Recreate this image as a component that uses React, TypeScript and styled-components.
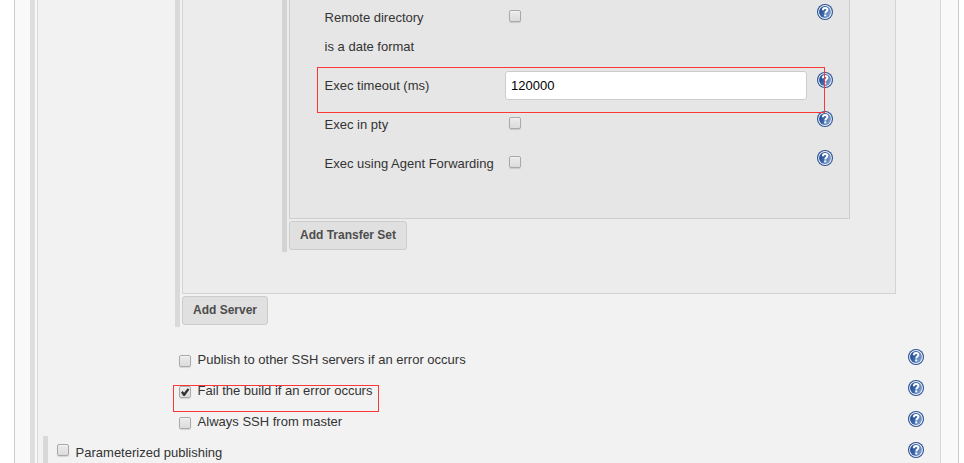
import React, { useId } from 'react';
import styled, { createGlobalStyle } from 'styled-components';

const GlobalStyle = createGlobalStyle`
  * { box-sizing: border-box; }
  body {
    margin: 0;
    background: #fff;
    color: #333;
    font: 13px/29px "Liberation Sans", Arial, Helvetica, sans-serif;
  }
`;

const Page = styled.div`
  height: 463px;
  width: 964px;
  padding: 0 5px 0 14px;
  overflow: hidden;
`;

const Section = styled.section`
  display: flex;
  gap: 2px;
  width: 945px;
  height: 100%;
  padding-left: 15px;
  background: #f9f9f9;
  border: solid #ccc;
  border-width: 0 1px;
`;

const DragBar = styled.div<{ $tone: string }>`
  flex: none;
  width: 5px;
  background: ${(p) => p.$tone};
`;

const Builder = styled.div`
  width: 904px;
  background: #f2f2f2;
  border: solid #d8d8d8;
  border-width: 0 1px;
`;

const Group = styled.div<{ $indent: number; $height: number }>`
  display: flex;
  gap: 2px;
  height: ${(p) => p.$height}px;
  margin-left: ${(p) => p.$indent}px;
`;

const Stack = styled.div`
  display: flex;
  flex-direction: column;
  align-items: flex-start;
  gap: 2px;
`;

const ServerBox = styled.div`
  width: 714px;
  height: 294px;
  background: #ececec;
  border: 1px solid #d3d3d3;
  border-top: 0;
`;

const TransferBox = styled.div`
  width: 561px;
  height: 219px;
  padding-left: 34px;
  background: #e6e6e6;
  border: 1px solid #cecece;
  border-top: 0;
`;

const Button = styled.button<{ $width: number }>`
  width: ${(p) => p.$width}px;
  height: 29px;
  padding: 0;
  border: 1px solid #ccc;
  border-radius: 3px;
  background: #e0e0e0;
  color: #4d4d4d;
  font: bold 12px/25px "Liberation Sans", Arial, sans-serif;
  white-space: nowrap;
`;

const Field = styled.div<{ $height: number }>`
  display: grid;
  grid-template-columns: 181px 302px 26px;
  align-items: start;
  height: ${(p) => p.$height}px;
`;

const FieldLabel = styled.label`
  padding: 3px 0 0 0.6px;
  white-space: pre-line;
`;

const HelpCell = styled.span<{ $gap?: number }>`
  display: block;
  height: 16px;
  margin: 4px 0 0 ${(p) => p.$gap ?? 0}px;
  line-height: 0;
`;

const TextInput = styled.input`
  width: 302px;
  height: 29px;
  margin-top: 3px;
  padding: 0 5px;
  border: 1px solid #ccc;
  border-radius: 3px;
  background: #fff;
  color: #000;
  font: 13px "Liberation Sans", Arial, sans-serif;
  outline: 0;
`;

const Check = styled.span<{ $top?: number; $left?: number }>`
  display: block;
  flex: none;
  width: 12px;
  height: 12px;
  margin: ${(p) => p.$top ?? 10}px 0 0 ${(p) => p.$left ?? 0}px;
  border: 1px solid #a9a9a9;
  border-radius: 2px;
  background: linear-gradient(#ebebeb, #dcdcdc);
  box-shadow: 0 1px 1px rgba(0, 0, 0, 0.12), inset 0 1px 1px rgba(255, 255, 255, 0.5);
  line-height: 0;
`;

const Options = styled.div`
  height: 109px;
  padding: 18px 0 0 141px;
`;

const OptionRow = styled.div`
  display: flex;
  width: 745px;
  height: 31px;
`;

const OptionLabel = styled.label`
  flex: 1;
  margin-left: 6px;
  padding-left: 0.6px;
  white-space: nowrap;
`;

const ParamRow = styled.div`
  display: flex;
  width: 881px;
  height: 27px;
  margin-left: 5px;
`;

const ParamContent = styled.div`
  display: flex;
  flex: 1;
  padding-top: 2px;
`;

const Highlight = styled.div<{ $x: number; $y: number; $w: number; $h: number }>`
  position: absolute;
  left: ${(p) => p.$x}px;
  top: ${(p) => p.$y}px;
  width: ${(p) => p.$w}px;
  height: ${(p) => p.$h}px;
  border: 1px solid #fb3838;
  pointer-events: none;
`;

function HelpIcon() {
  const id = useId();
  return (
    <svg width="16" height="16" viewBox="0 0 16 16">
      <defs>
        <linearGradient id={id} x1="0" y1="0.3" x2="1" y2="0.7">
          <stop offset="0" stopColor="#1f4790" />
          <stop offset="0.45" stopColor="#3e68ab" />
          <stop offset="1" stopColor="#86a6d4" />
        </linearGradient>
      </defs>
      <circle cx="8" cy="8" r="8" fill="#2b5190" />
      <circle cx="8" cy="8" r="6.9" fill="#f0f4fa" />
      <circle cx="8" cy="8" r="5.95" fill={`url(#${id})`} />
      <path d="M5.8 6.3C5.8 4.6 6.8 3.9 8.1 3.9c1.5 0 2.3.8 2.3 1.9 0 1.7-2.1 1.8-2.1 3.6" fill="none" stroke="#fff" strokeWidth="2" />
      <rect x="7.2" y="10.4" width="2.1" height="2" fill="#fff" />
    </svg>
  );
}

function Checkbox({ checked, top, left }: { checked?: boolean; top?: number; left?: number }) {
  return (
    <Check role="checkbox" aria-checked={!!checked} $top={top} $left={left}>
      {checked && (
        <svg width="10" height="10" viewBox="0 0 10 10">
          <path d="M1 5.5 2.7 4 4.1 5.7 7.6 1.2 9.4 2.5 4.8 8.9 3.5 8.9Z" fill="#333" />
        </svg>
      )}
    </Check>
  );
}

const options = [
  { label: 'Publish to other SSH servers if an error occurs' },
  { label: 'Fail the build if an error occurs', checked: true },
  { label: 'Always SSH from master' },
];

function CheckField({ label, height }: { label: string; height: number }) {
  return (
    <Field $height={height}>
      <FieldLabel>{label}</FieldLabel>
      <Checkbox left={4} />
      <HelpCell $gap={10}><HelpIcon /></HelpCell>
    </Field>
  );
}

export default function App() {
  return (
    <>
      <GlobalStyle />
      <Page>
        <Section>
          <DragBar $tone="#dedede" />
          <Builder>
            <Group $indent={137} $height={327}>
              <DragBar $tone="#d9d9d9" />
              <Stack>
                <ServerBox>
                  <Group $indent={99} $height={252}>
                    <DragBar $tone="#d3d3d3" />
                    <Stack>
                      <TransferBox>
                        <CheckField label={'Remote directory\nis a date format'} height={68} />
                        <Field $height={39}>
                          <FieldLabel>Exec timeout (ms)</FieldLabel>
                          <TextInput defaultValue="120000" />
                          <HelpCell $gap={10}><HelpIcon /></HelpCell>
                        </Field>
                        <CheckField label="Exec in pty" height={39} />
                        <CheckField label="Exec using Agent Forwarding" height={39} />
                      </TransferBox>
                      <Button $width={118}>Add Transfer Set</Button>
                    </Stack>
                  </Group>
                </ServerBox>
                <Button $width={86}>Add Server</Button>
              </Stack>
            </Group>
            <Options>
              {options.map((o) => (
                <OptionRow key={o.label}>
                  <Checkbox checked={o.checked} />
                  <OptionLabel>{o.label}</OptionLabel>
                  <HelpCell><HelpIcon /></HelpCell>
                </OptionRow>
              ))}
            </Options>
            <ParamRow>
              <DragBar $tone="#d9d9d9" />
              <ParamContent>
                <Checkbox top={6} left={9} />
                <OptionLabel>Parameterized publishing</OptionLabel>
                <HelpCell><HelpIcon /></HelpCell>
              </ParamContent>
            </ParamRow>
          </Builder>
        </Section>
      </Page>
      <Highlight $x={317} $y={67} $w={508} $h={46} />
      <Highlight $x={173} $y={385} $w={206} $h={27} />
    </>
  );
}
